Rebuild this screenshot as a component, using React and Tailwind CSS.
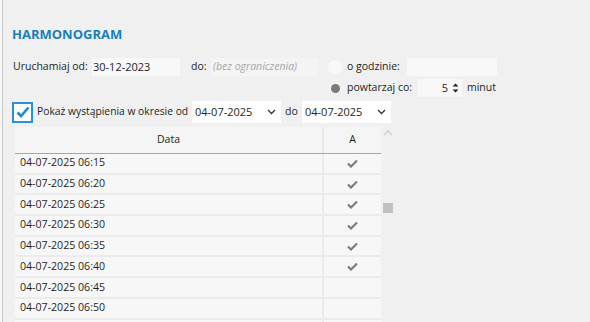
import React from "react";

const rows = [
  ["04-07-2025 06:15", true],
  ["04-07-2025 06:20", true],
  ["04-07-2025 06:25", true],
  ["04-07-2025 06:30", true],
  ["04-07-2025 06:35", true],
  ["04-07-2025 06:40", true],
  ["04-07-2025 06:45", false],
  ["04-07-2025 06:50", false],
  ["", false],
];

function Check() {
  return (
    <svg width="11" height="9" viewBox="0 0 11 9">
      <path d="M1 4.5 L4 7.5 L10 1.5" stroke="#7d7d7d" strokeWidth="2.2" fill="none" />
    </svg>
  );
}

function Chevron() {
  return (
    <svg width="9" height="6" viewBox="0 0 9 6">
      <path d="M1 1 L4.5 4.5 L8 1" stroke="#333" strokeWidth="1.3" fill="none" />
    </svg>
  );
}

export default function App() {
  return (
    <div
      className="w-[590px] h-[322px] bg-[#f0f0f0] flex overflow-hidden text-[10.5px] text-[#1e1e1e] whitespace-nowrap"
      style={{ fontFamily: '"Open Sans", "Noto Sans", sans-serif' }}
    >
      <div className="w-[3px] h-full border-r border-[#c9c9c9] bg-[#f7f7f7] shrink-0" />
      <div className="flex-1 pl-[9px]">
        <div className="pt-[25px] h-[46px] text-[13px] font-bold text-[#1a7fb8] leading-[18px]">HARMONOGRAM</div>
        <div className="mt-[12px] flex">
          <div className="flex items-center h-[18px]">
            <span className="ml-[1px] w-[79px] shrink-0">Uruchamiaj od:</span>
            <div className="w-[88px] shrink-0 h-[18px] bg-[#f8f8f8] flex items-center pl-[1px] text-[11px]">30-12-2023</div>
            <span className="ml-[11px] w-[20px] shrink-0">do:</span>
            <div className="w-[107px] shrink-0 h-[18px] bg-[#f4f4f4] flex items-center pl-[2px] italic text-[#a8a8a8]">(bez ograniczenia)</div>
          </div>
          <div className="ml-[10px] flex flex-col gap-[3px]">
            <div className="flex items-center h-[18px]">
              <div className="w-[14px] h-[14px] shrink-0 rounded-full bg-[#f8f8f8]" />
              <span className="ml-[5px] w-[60px] shrink-0">o godzinie:</span>
              <div className="w-[90px] shrink-0 h-[18px] bg-[#f8f8f8]" />
            </div>
            <div className="flex items-center h-[18px]">
              <div className="w-[14px] h-[14px] shrink-0 rounded-full bg-[#f2f2f2] flex items-center justify-center">
                <div className="w-[9px] h-[9px] rounded-full bg-[#7a7a7a]" />
              </div>
              <span className="ml-[5px] w-[71px] shrink-0">powtarzaj co:</span>
              <div className="w-[44px] shrink-0 h-[18px] bg-[#f8f8f8] flex items-center justify-end pr-[3px] gap-[4px] text-[11px]">
                <span>5</span>
                <svg width="7" height="12" viewBox="0 0 7 12">
                  <path d="M0.5 4.5 L3.5 1.5 L6.5 4.5 Z" fill="#222" />
                  <path d="M0.5 7.5 L3.5 10.5 L6.5 7.5 Z" fill="#222" />
                </svg>
              </div>
              <span className="ml-[5px]">minut</span>
            </div>
          </div>
        </div>
        <div className="mt-[4px] flex items-center h-[22px]">
          <div className="w-[21px] h-[21px] shrink-0 border-2 border-[#2a8fd6] bg-white flex items-center justify-center">
            <svg width="14" height="12" viewBox="0 0 14 12">
              <path d="M1.5 6.5 L5 10 L12.5 1.5" stroke="#1a8ad4" strokeWidth="2.6" fill="none" />
            </svg>
          </div>
          <span className="ml-[4px] w-[155px] shrink-0 text-[10.3px]">Pokaż wystąpienia w okresie od</span>
          <div className="w-[89px] shrink-0 h-[22px] bg-white flex items-center justify-between pl-[3px] pr-[5px] text-[11px]">
            <span>04-07-2025</span>
            <Chevron />
          </div>
          <span className="ml-[4px] w-[17px] shrink-0">do</span>
          <div className="w-[89px] shrink-0 h-[22px] bg-white flex items-center justify-between pl-[3px] pr-[5px] text-[11px]">
            <span>04-07-2025</span>
            <Chevron />
          </div>
        </div>
        <div className="mt-[4px] flex">
          <div className="ml-[3px] w-[366px]">
            <div className="flex h-[27px] border-b border-[#a6a6a6] bg-[#f5f5f5]">
              <div className="w-[309px] flex items-center justify-center border-r-2 border-[#e9e9e9]">Data</div>
              <div className="flex-1 flex items-center justify-center">A</div>
            </div>
            {rows.map(([d, c], i) => (
              <div key={i} className="flex h-[20.7px] border-b-2 border-[#ebebeb] bg-[#f7f7f7]">
                <div className="w-[309px] flex items-center pl-[5px] border-r-2 border-[#ebebeb] text-[10.6px]">{d}</div>
                <div className="flex-1 flex items-center justify-center">{c ? <Check /> : null}</div>
              </div>
            ))}
          </div>
          <div className="w-[12px] ml-[1px] relative">
            <svg className="absolute left-[1px] top-[3px]" width="10" height="6" viewBox="0 0 10 6">
              <path d="M1 5 L5 1 L9 5" stroke="#cfcfcf" strokeWidth="1.4" fill="none" />
            </svg>
            <div className="absolute left-[1px] top-[76px] w-[10px] h-[10px] bg-[#c1c1c1]" />
          </div>
        </div>
      </div>
    </div>
  );
}
